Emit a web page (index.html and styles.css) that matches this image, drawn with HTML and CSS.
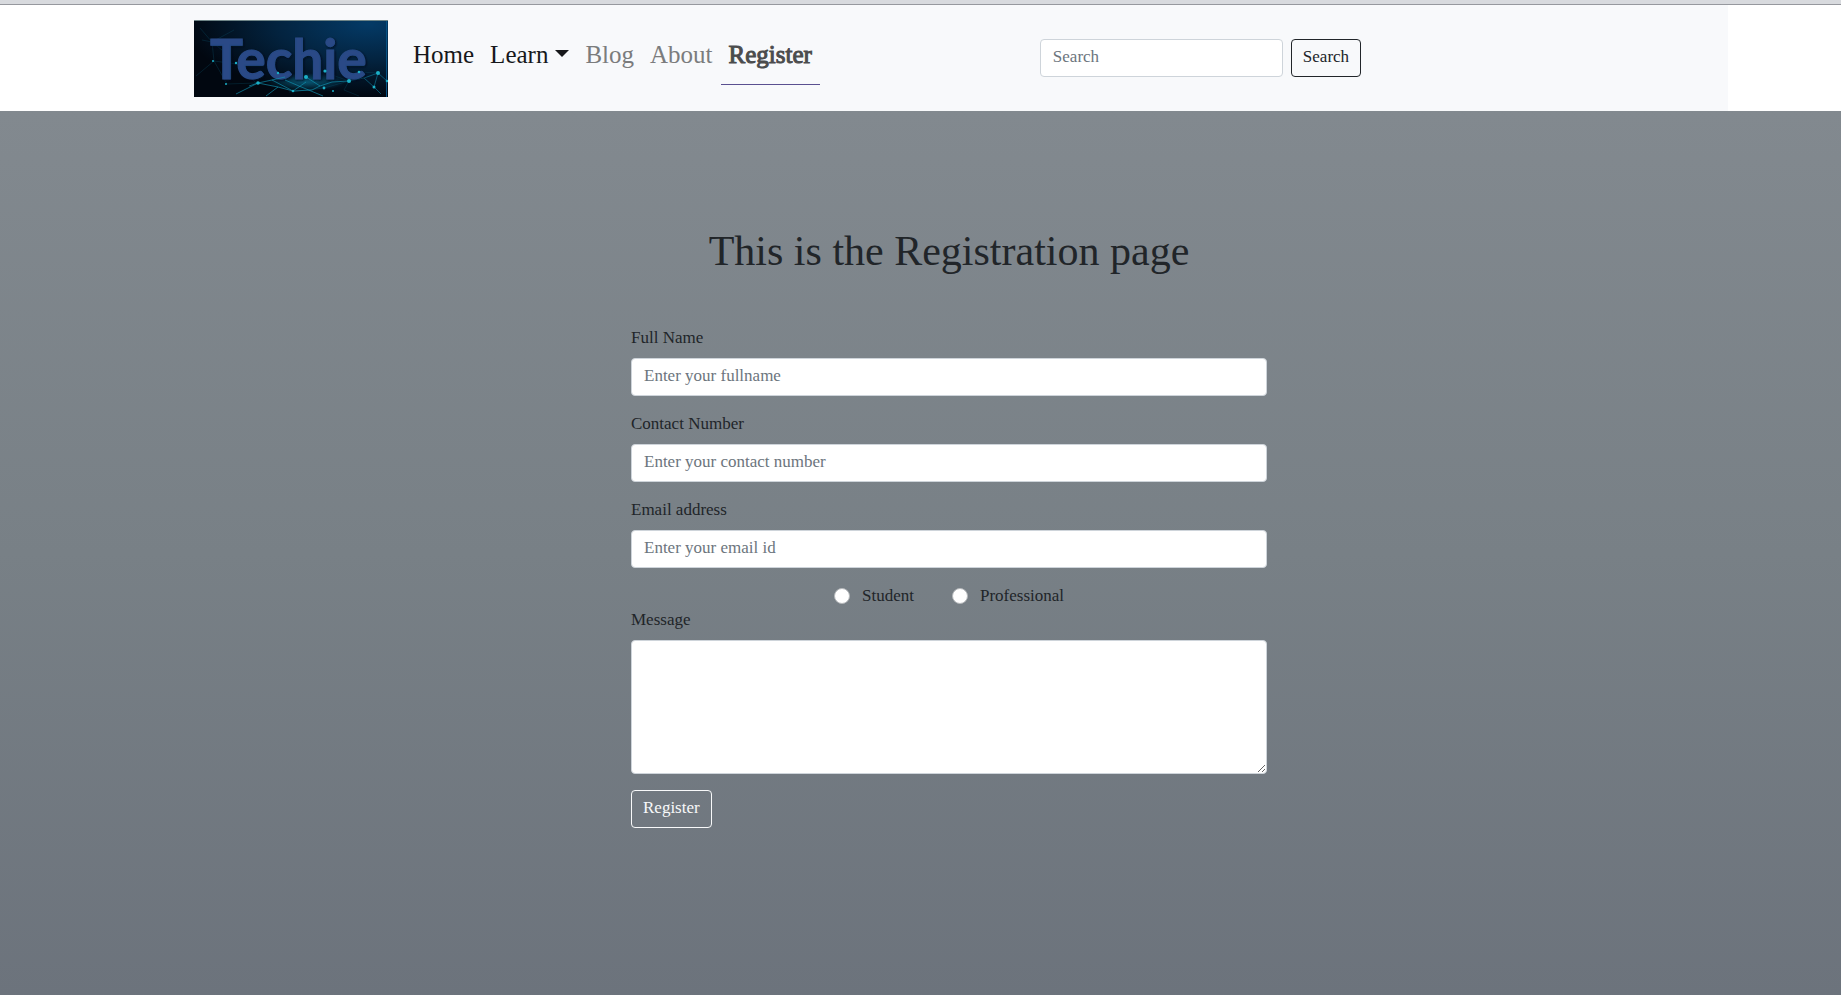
FILE: index.html
```html
<!DOCTYPE html>
<html lang="en">
<head>
<meta charset="utf-8">
<meta name="viewport" content="width=device-width, initial-scale=1">
<title>Techie - Register</title>
<link rel="stylesheet" href="styles.css">
</head>
<body>
<header class="header">
  <nav class="navbar" aria-label="Main">
    <a class="brand" href="#" aria-label="Techie">
      <svg class="logo" width="194" height="77" viewBox="0 0 194 77">
        <defs>
          <radialGradient id="sky" cx="0.9" cy="0.05" r="0.95">
            <stop offset="0" stop-color="#043a66"/>
            <stop offset="0.5" stop-color="#03233f"/>
            <stop offset="1" stop-color="#010710"/>
          </radialGradient>
          <radialGradient id="glow">
            <stop offset="0" stop-color="#0c86ac" stop-opacity="0.6"/>
            <stop offset="1" stop-color="#0c86ac" stop-opacity="0"/>
          </radialGradient>
          <filter id="shade" x="-10%" y="-10%" width="120%" height="130%">
            <feDropShadow dx="1" dy="1" stdDeviation="1.2" flood-color="#000a1c" flood-opacity="0.9"/>
          </filter>
        </defs>
        <rect width="194" height="77" fill="url(#sky)"/>
        <path d="M0 .5H194" stroke="#6f8587"/>
        <path d="M192.5 1V77" stroke="#075385"/>
        <g fill="none" stroke="#0a536f" stroke-width=".6" opacity=".5">
          <path d="M6 8L18 22 40 10M18 22L20 41 43 44 62 63M20 41L2 56M20 41L33 64 62 63M8 20L18 22 28 30"/>
          <path d="M130 52L155 61 165 52M165 52L184 53M155 61L150 70 165 76M95 72L130 68 155 61"/>
        </g>
        <g fill="none" stroke="#0e7797" stroke-width=".8" opacity=".8">
          <path d="M155 61L170 58 184 53 180 67 187 74M170 58L180 67M184 53L193 61"/>
        </g>
        <ellipse cx="112" cy="62" rx="40" ry="9" fill="url(#glow)"/>
        <text class="logo-text" x="16" y="59" filter="url(#shade)">Techie</text>
        <g fill="none" stroke="#1295b5" stroke-width=".8" opacity=".8">
          <path d="M55 66L64 63 78 60 91 57M112 57L126 66 138 62 155 61M64 63L84 67 99 71 112 62M78 60L99 71 118 70 126 66M91 60L105 66 129 76M42 74L64 63M84 67L72 76"/>
        </g>
        <g fill="#1bb0c8">
          <circle cx="64" cy="63" r="1.8"/><circle cx="112" cy="57" r="2"/><circle cx="155" cy="61" r="2"/>
          <circle cx="184" cy="53" r="2"/><circle cx="131" cy="51" r="1.6"/><circle cx="165" cy="52" r="1.3"/>
          <circle cx="180" cy="67" r="1.5"/><circle cx="99" cy="71" r="1.3"/><circle cx="130" cy="68" r="1.4"/>
          <circle cx="42" cy="43" r="1.2"/><circle cx="84" cy="53" r="1.2"/><circle cx="193" cy="61" r="1.3"/>
          <circle cx="19" cy="41" r="1"/><circle cx="32" cy="64" r="1"/><circle cx="139" cy="71" r="1"/>
        </g>
      </svg>
    </a>
    <ul class="menu">
      <li><a class="link link-dark" href="#">Home</a></li>
      <li><a class="link link-dark" href="#">Learn<span class="caret"></span></a></li>
      <li><a class="link" href="#">Blog</a></li>
      <li><a class="link" href="#">About</a></li>
      <li><a class="link link-active" href="#" aria-current="page">Register</a></li>
    </ul>
    <form class="search" role="search">
      <input class="control search-input" type="search" placeholder="Search" aria-label="Search">
      <button class="button" type="submit">Search</button>
    </form>
  </nav>
</header>
<main class="page">
  <h1 class="title">This is the Registration page</h1>
  <form class="form">
    <div class="field">
      <label class="label" for="fullname">Full Name</label>
      <input class="control" id="fullname" type="text" placeholder="Enter your fullname">
    </div>
    <div class="field">
      <label class="label" for="contact">Contact Number</label>
      <input class="control" id="contact" type="tel" placeholder="Enter your contact number">
    </div>
    <div class="field">
      <label class="label" for="email">Email address</label>
      <input class="control" id="email" type="email" placeholder="Enter your email id">
    </div>
    <div class="choices">
      <div class="choice">
        <input class="radio" type="radio" name="role" id="student">
        <label for="student">Student</label>
      </div>
      <div class="choice">
        <input class="radio" type="radio" name="role" id="professional">
        <label for="professional">Professional</label>
      </div>
    </div>
    <div class="field">
      <label class="label" for="message">Message</label>
      <textarea class="control message" id="message" rows="5"></textarea>
    </div>
    <button class="button button-light" type="submit">Register</button>
  </form>
</main>
</body>
</html>
```

FILE: styles.css
```css
* {
  box-sizing: border-box;
}

body {
  margin: 0;
  min-height: 100vh;
  display: flex;
  flex-direction: column;
  font-family: "Liberation Serif", serif;
  font-size: 17px;
  line-height: 24px;
  color: #212529;
}

.header {
  padding: 0 113px 0 170px;
  background: #fff;
  border-top: 4px solid #d8dade;
  box-shadow: inset 0 1px #96989e;
}

.navbar {
  display: flex;
  align-items: center;
  margin-top: 1px;
  padding: 14px 24px;
  background: #f8f9fb;
}

.brand {
  margin-right: 17px;
  padding-top: 1px;
}

.logo {
  display: block;
}

.logo-text {
  font-family: Lato, sans-serif;
  font-size: 55px;
  font-weight: 700;
  fill: #294a86;
  stroke: #294a86;
  stroke-width: 1px;
}

.menu {
  display: flex;
  margin: 0;
  padding: 0;
  list-style: none;
}

.link {
  display: flex;
  align-items: center;
  padding: 6px 8px 11px;
  border-bottom: 1px solid transparent;
  font-size: 25px;
  line-height: 36px;
  color: #7b7c7d;
  text-decoration: none;
}

.link-dark {
  color: #17181a;
}

.link-active {
  color: #4b4c4d;
  border-bottom-color: #5a5090;
  -webkit-text-stroke: 1px #4b4c4d;
}

.caret {
  margin: 0 0 4px 7px;
  border-top: 7px solid;
  border-left: 7px solid transparent;
  border-right: 7px solid transparent;
}

.search {
  display: flex;
  gap: 8px;
  margin-left: 220px;
}

.control {
  display: block;
  width: 100%;
  height: 38px;
  padding: 5px 12px 7px;
  border: 1px solid #ced4da;
  border-radius: 4px;
  background: #fff;
  font: inherit;
  color: #212529;
}

.control::placeholder {
  color: #6c757d;
  opacity: 1;
}

.search-input {
  width: 243px;
  appearance: none;
}

.button {
  height: 38px;
  padding: 5px 11px 7px;
  border: 1px solid #212529;
  border-radius: 4px;
  background: transparent;
  font: inherit;
  color: #212529;
}

.button-light {
  border-color: #f8f9fa;
  color: #f8f9fa;
}

.page {
  flex: 1;
  padding: 115px 113px 48px 170px;
  background: linear-gradient(#82898f, #788086 50%, #6c737c);
}

.title {
  margin: 0 0 50px;
  font-size: 42px;
  font-weight: 400;
  line-height: 50px;
  text-align: center;
}

.form {
  max-width: 636px;
  margin: 0 auto;
}

.field {
  margin-bottom: 16px;
}

.label {
  display: block;
  margin-bottom: 8px;
}

.choices {
  display: flex;
  justify-content: center;
  gap: 38px;
}

.choice {
  display: flex;
  align-items: center;
  gap: 12px;
}

.radio {
  appearance: none;
  width: 16px;
  height: 16px;
  margin: 0;
  border: 1px solid #b5b8bb;
  border-radius: 50%;
  background: #fff;
}

.radio:checked {
  border: 5px solid #0d6efd;
}

.message {
  height: 134px;
  resize: vertical;
}
```
